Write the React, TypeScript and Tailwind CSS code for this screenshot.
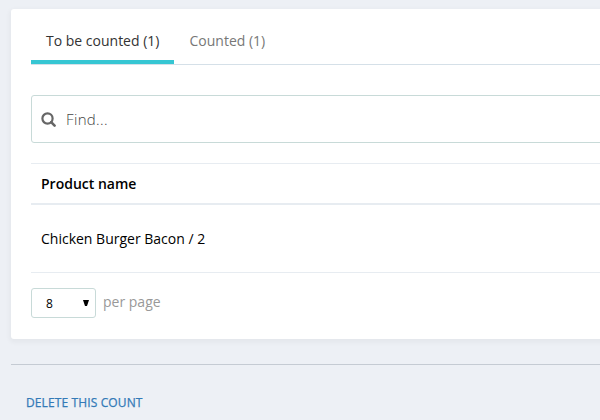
import React from "react";

function SearchIcon() {
  return (
    <svg width="15" height="15" viewBox="0 0 15 15" fill="none" stroke="#666666" className="block shrink-0">
      <circle cx="6.500" cy="6.500" r="5.100" strokeWidth="2.200" />
      <path d="M10.200 10.200L13.600 13.600" strokeWidth="2.600" strokeLinecap="round" />
    </svg>
  );
}

function Tabs() {
  return (
    <div className="flex h-[56px] border-b border-[#d5e0e8] text-[14px] leading-[20px]">
      <div className="h-[55px] w-[143px] border-b-4 border-[#36c6d3] pt-[22px] pl-[15px] text-[#333333]">
        To be counted (1)
      </div>
      <div className="pt-[22px] pl-[15.5px] text-[#777777]">Counted (1)</div>
    </div>
  );
}

export default function App() {
  return (
    <div className="h-[420px] w-[600px] overflow-hidden bg-[#edf0f5] pt-[9px] pl-[11px] font-['Open_Sans','Noto_Sans',sans-serif] whitespace-nowrap">
      <div className="h-[330px] w-[620px] rounded-[3px] bg-white pl-5 shadow-[0_2px_4px_2px_rgba(0,0,0,0.035)]">
        <Tabs />
        <div className="mt-[30px] flex h-[48px] items-center gap-[10px] rounded-[3px] border border-[#c8dad8] pl-[9px]">
          <SearchIcon />
          <span className="text-[15px] leading-[20px] font-light tracking-[0.35px] text-[#444444]">Find...</span>
        </div>
        <div className="mt-5 h-[42px] border-t border-b-2 border-t-[#e7ecf1] border-b-[#e7ecf1] pt-[10px] pl-[10px] text-[14px] leading-[20px] font-semibold text-black">
          Product name
        </div>
        <div className="h-[68px] border-b border-[#e7ecf1] pt-6 pl-[10px] text-[14px] leading-[20px] text-black">
          Chicken Burger Bacon / 2
        </div>
        <div className="mt-[15px] flex gap-[7px]">
          <div className="flex h-[30px] w-[65px] items-center justify-between rounded-[3px] border border-[#c8dad8] pr-[6px] pl-[14px]">
            <span className="pt-px text-[12px] leading-[18px] text-black">8</span>
            <svg width="6" height="6" viewBox="0 0 6 6" className="block">
              <path d="M0 0h6L4 6H2z" fill="#000" />
            </svg>
          </div>
          <span className="pt-[4px] text-[14px] leading-[20px] text-[#999999]">per page</span>
        </div>
      </div>
      <div className="mt-[25px] border-t border-[#c5cbd3] pt-[28px] pl-[15px] text-[12px] leading-[20px] tracking-[0.12px] text-[#337ab7] [-webkit-text-stroke:0.25px_#337ab7]">
        DELETE THIS COUNT
      </div>
    </div>
  );
}
